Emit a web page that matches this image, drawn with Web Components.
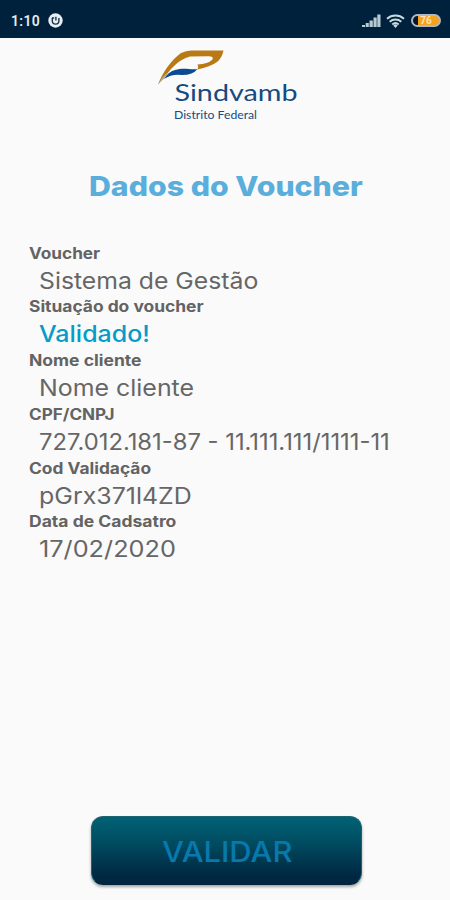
<!DOCTYPE html>
<html lang="pt-BR">
    <head>
        <meta charset="utf-8" />
        <meta name="viewport" content="width=device-width, initial-scale=1" />
        <title>Dados do Voucher</title>
        <style>
            body {
                margin: 0;
                background: #fafafa;
                font-family: Inter, "Open Sans", sans-serif;
            }
        </style>
    </head>
    <body>
        <voucher-screen>
            <status-bar slot="status" battery="76">1:10</status-bar>
            <brand-logo slot="logo"></brand-logo>
            <fit-text slot="title" width="274">Dados do Voucher</fit-text>
            <voucher-field label="Voucher" label-width="71">
                <fit-text width="219">Sistema de Gestão</fit-text>
            </voucher-field>
            <voucher-field label="Situação do voucher" label-width="175" valid>
                <fit-text width="111">Validado!</fit-text>
            </voucher-field>
            <voucher-field label="Nome cliente" label-width="113">
                <fit-text width="155">Nome cliente</fit-text>
            </voucher-field>
            <voucher-field label="CPF/CNPJ" label-width="86">
                <fit-text width="351">727.012.181-87 - 11.111.111/1111-11</fit-text>
            </voucher-field>
            <voucher-field label="Cod Validação" label-width="122">
                <fit-text width="153">pGrx371l4ZD</fit-text>
            </voucher-field>
            <voucher-field label="Data de Cadsatro" label-width="147">
                <fit-text width="137">17/02/2020</fit-text>
            </voucher-field>
            <action-button slot="action">
                <fit-text width="130">VALIDAR</fit-text>
            </action-button>
        </voucher-screen>

        <script>
            // Stretches one line of text to the width attribute
            class FitText extends HTMLElement {
                connectedCallback() {
                    if (!this.shadowRoot) {
                        this.attachShadow({ mode: "open" }).innerHTML = `
                            <style>
                                :host { display: block; text-align: left; white-space: nowrap; }
                                span { display: inline-block; transform-origin: 0 50%; }
                            </style>
                            <span><slot></slot></span>`;
                    }
                    requestAnimationFrame(() => this.fit());
                    this.fit();
                }
                fit() {
                    const width = Number(this.getAttribute("width"));
                    const span = this.shadowRoot.querySelector("span");
                    this.style.width = `${width}px`;
                    if (span.offsetWidth) {
                        span.style.transform = `scaleX(${width / span.offsetWidth})`;
                    }
                }
            }

            class StatusBar extends HTMLElement {
                connectedCallback() {
                    this.attachShadow({ mode: "open" }).innerHTML = `
                        <style>
                            :host {
                                display: flex;
                                align-items: center;
                                box-sizing: border-box;
                                height: 38px;
                                padding: 4px 9px 0 11px;
                                background: #00213c;
                                border-bottom: 1px solid #15183a;
                                color: #e3edf2;
                                font: 600 14px Roboto, sans-serif;
                            }
                            .time { width: 30px; letter-spacing: 0.3px; margin-right: 7px; }
                            .space { flex: 1; }
                            svg { display: block; }
                            .signal { margin-right: 5px; }
                            .wifi { margin-right: 6px; }
                            .battery {
                                box-sizing: border-box;
                                width: 30px;
                                height: 13px;
                                border: 2px solid #aeb9c8;
                                border-radius: 7px;
                                background: linear-gradient(90deg, #06172a 20%, #f5a21c 20%);
                                color: #ffe4b5;
                                font: 700 10px/9px Roboto, sans-serif;
                                text-align: center;
                            }
                        </style>
                        <span class="time"><slot></slot></span>
                        <svg width="15" height="15" viewBox="0 0 15 15">
                            <circle cx="7.5" cy="7.5" r="7.2" fill="#e7eff2" />
                            <path d="M4.3 4.8v3a3.3 3.3 0 0 0 6.6 0V5M4 5h2.2M7.9 3.8v3.8" fill="none" stroke="#17364d" stroke-width="1.4" />
                        </svg>
                        <span class="space"></span>
                        <svg class="signal" width="19" height="14" viewBox="0 0 19 14">
                            <path d="M0 11h3v2H0zM3.7 9h3.1v4H3.7zM7.5 6.5h3.3V13H7.5zM11.5 3.5h3.2V13h-3.2zM15.3.5h3.2V13h-3.2z" fill="#b6ccd1" />
                        </svg>
                        <svg class="wifi" width="19" height="14" viewBox="0 0 19 14">
                            <path d="M1 4.7a13 13 0 0 1 17 0M3.7 7.7a9 9 0 0 1 11.6 0M6.3 10.4a5 5 0 0 1 6.4 0" fill="none" stroke="#c5dbe0" stroke-width="2" />
                            <path d="M7.3 11.4a3 3 0 0 1 4.4 0L9.5 14z" fill="#c5dbe0" />
                        </svg>
                        <span class="battery">${this.getAttribute("battery")}</span>`;
                }
            }

            class BrandLogo extends HTMLElement {
                connectedCallback() {
                    this.attachShadow({ mode: "open" }).innerHTML = `
                        <style>
                            :host { display: block; width: 146px; height: 76px; }
                            svg { display: block; }
                            text { font-family: Lato, sans-serif; fill: #164a80; }
                        </style>
                        <svg width="146" height="76" viewBox="0 0 146 76">
                            <path d="M1 34.5C5 24 13 11 24 3Q29 .5 34 .5H66.500Q65 8 60 12Q53 17 40.500 19.500Q42 17 40.500 14.500Q51 14 55.500 9.500Q57 6 51 6.200L33 6.500Q23 9 14 19Q8 27 1 34.500Z" fill="#b97a16" />
                            <path d="M7 29Q11 22 18 20C27 17 33 20 40.500 19Q36 25 25 25Q15 23.500 7 29Z" fill="#0c4b91" />
                            <path d="M1 34.500Q4 28 10 23L8 28Q5 30 1 34.500Z" fill="#b6ab8c" />
                            <text x="17.500" y="51" font-size="24" textLength="123" lengthAdjust="spacingAndGlyphs">Sindvamb</text>
                            <text x="17" y="68.500" font-size="11" textLength="83" lengthAdjust="spacingAndGlyphs">Distrito Federal</text>
                        </svg>`;
                }
            }

            class VoucherField extends HTMLElement {
                connectedCallback() {
                    this.attachShadow({ mode: "open" }).innerHTML = `
                        <style>
                            :host { display: block; height: 53.75px; color: #666; }
                            .label {
                                height: 20px;
                                color: #636363;
                                font-size: 15.5px;
                                font-weight: 750;
                                line-height: 20px;
                            }
                            .value {
                                padding-left: 9.5px;
                                font-size: 22.5px;
                                font-weight: 430;
                                line-height: 33px;
                            }
                            :host([valid]) .value { color: #079bc8; font-weight: 550; }
                        </style>
                        <div class="label">
                            <fit-text width="${this.getAttribute("label-width")}">${this.getAttribute("label")}</fit-text>
                        </div>
                        <div class="value"><slot></slot></div>`;
                }
            }

            class ActionButton extends HTMLElement {
                connectedCallback() {
                    this.attachShadow({ mode: "open" }).innerHTML = `
                        <style>
                            :host { display: block; }
                            button {
                                display: flex;
                                align-items: center;
                                justify-content: center;
                                box-sizing: border-box;
                                width: 271px;
                                height: 69px;
                                padding: 2px 0 0;
                                border: 1px solid #1c6570;
                                border-bottom-color: #03233c;
                                border-radius: 12px;
                                background: linear-gradient(#006275, #004b60 40%, #002641 90%);
                                box-shadow: 0 2px 3px rgba(0, 0, 0, 0.35);
                                color: #0779ad;
                                font: 500 28px Inter, sans-serif;
                            }
                        </style>
                        <button type="button"><slot></slot></button>`;
                }
            }

            class VoucherScreen extends HTMLElement {
                connectedCallback() {
                    this.attachShadow({ mode: "open" }).innerHTML = `
                        <style>
                            :host {
                                display: flex;
                                flex-direction: column;
                                height: 900px;
                                overflow: hidden;
                            }
                            .logo { padding: 12px 0 0 157px; }
                            h1 {
                                margin: 42px 0 0;
                                padding-left: 89px;
                                color: #5aaedc;
                                font-size: 27.5px;
                                font-weight: 800;
                                line-height: 36px;
                            }
                            .fields { flex: 1; padding: 39.6px 20px 0 29px; }
                            footer { padding: 0 0 15px 91px; }
                        </style>
                        <slot name="status"></slot>
                        <div class="logo"><slot name="logo"></slot></div>
                        <h1><slot name="title"></slot></h1>
                        <div class="fields"><slot></slot></div>
                        <footer><slot name="action"></slot></footer>`;
                }
            }

            customElements.define("voucher-screen", VoucherScreen);
            customElements.define("status-bar", StatusBar);
            customElements.define("brand-logo", BrandLogo);
            customElements.define("voucher-field", VoucherField);
            customElements.define("action-button", ActionButton);
            customElements.define("fit-text", FitText);
        </script>
    </body>
</html>
